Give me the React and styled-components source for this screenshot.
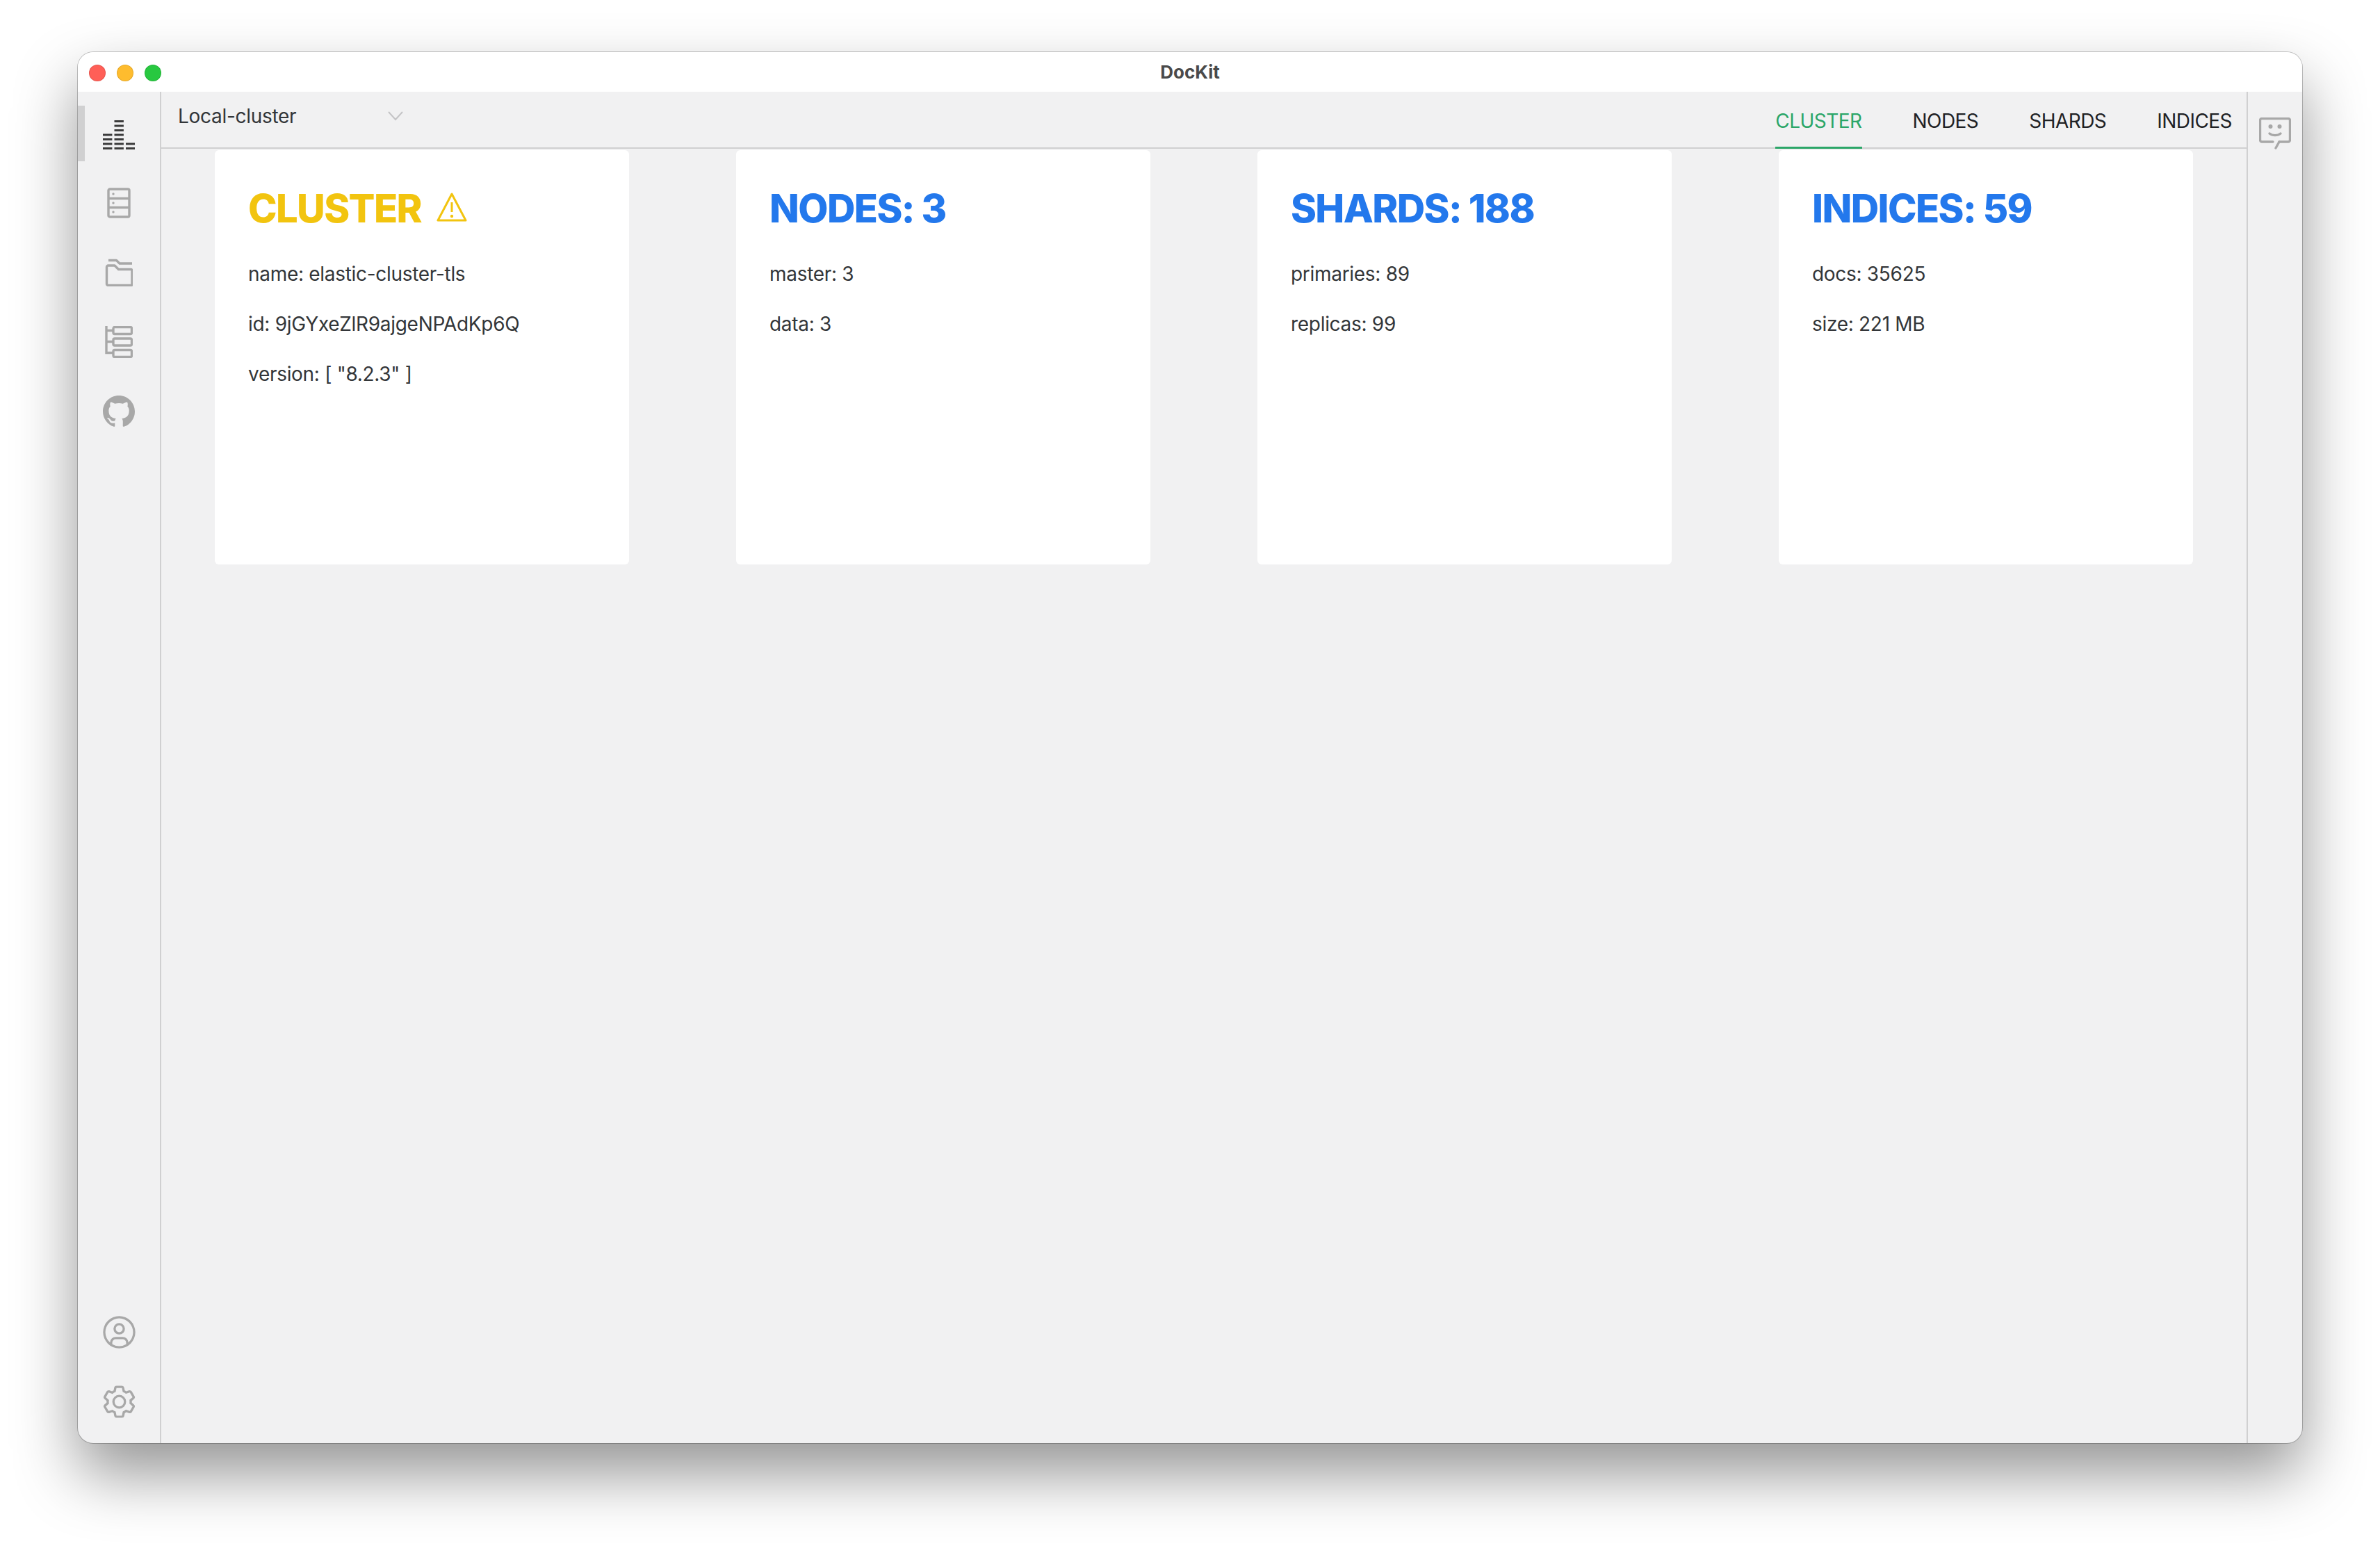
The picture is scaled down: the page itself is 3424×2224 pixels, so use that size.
import React from "react";
import styled, { createGlobalStyle } from "styled-components";
import { BsGithub } from "react-icons/bs";

const Global = createGlobalStyle`
  html, body { margin: 0; padding: 0; background: #fff; }
  * { box-sizing: border-box; }
`;

const Stage = styled.div`
  width: 3424px;
  height: 2224px;
  padding: 75px 112px 148px;
  background: #fff;
  font-family: Inter, "Liberation Sans", sans-serif;
  overflow: hidden;
`;
const Win = styled.div`
  height: 2001px;
  display: flex;
  flex-direction: column;
  border-radius: 22px;
  overflow: hidden;
  background: #f1f1f2;
  box-shadow: 0 0 0 1px rgba(0, 0, 0, 0.22), 0 44px 90px rgba(0, 0, 0, 0.42);
`;
const TitleBar = styled.div`
  height: 57px;
  flex: none;
  background: #fff;
  display: grid;
  grid-template-columns: 1fr auto 1fr;
  align-items: center;
  padding: 0 16px;
`;
const Lights = styled.div`
  display: flex;
  gap: 16px;
  padding-top: 2px;
`;
const Light = styled.span`
  width: 24px;
  height: 24px;
  border-radius: 50%;
  background: ${(p) => p.$c};
  box-shadow: inset 0 0 0 1px rgba(0, 0, 0, 0.1);
`;
const Title = styled.div`
  font-size: 26px;
  font-weight: 700;
  color: #4a4a4a;
`;
const Body = styled.div`
  flex: 1;
  min-height: 0;
  display: flex;
`;
const Rail = styled.nav`
  width: 120px;
  flex: none;
  display: flex;
  flex-direction: column;
  gap: 20px;
  padding: 20px 0;
  border-right: 2px solid #d0d0d1;
`;
const Spacer = styled.div`
  flex: 1;
`;
const RailItem = styled.div`
  position: relative;
  height: 80px;
  display: flex;
  align-items: center;
  justify-content: center;
  color: ${(p) => (p.$active ? "#3b3b3b" : "#a8a8a8")};
  &::before {
    content: "";
    display: ${(p) => (p.$active ? "block" : "none")};
    position: absolute;
    left: 0;
    top: 0;
    bottom: 0;
    width: 10px;
    background: #d0d0d1;
  }
`;
const Main = styled.main`
  flex: 1;
  min-width: 0;
  display: flex;
  flex-direction: column;
`;
const Header = styled.header`
  height: 82px;
  flex: none;
  display: flex;
  justify-content: space-between;
  border-bottom: 2px solid #d0d0d1;
`;
const ClusterSelect = styled.div`
  width: 348px;
  height: 70px;
  display: flex;
  align-items: center;
  justify-content: space-between;
  padding: 0 0 0 24px;
  font-size: 28px;
  letter-spacing: -0.3px;
  color: #333639;
`;
const Tabs = styled.div`
  display: flex;
  gap: 73px;
  padding-right: 21px;
`;
const Tab = styled.div`
  height: 82px;
  margin-bottom: -2px;
  padding-top: 22px;
  font-size: 28px;
  line-height: 40px;
  letter-spacing: -0.55px;
  color: ${(p) => (p.$active ? "#2ba668" : "#1f2225")};
  border-bottom: 3px solid ${(p) => (p.$active ? "#2ba668" : "transparent")};
`;
const Cards = styled.section`
  display: flex;
  justify-content: space-around;
  padding-top: 2px;
`;
const Card = styled.article`
  width: 596px;
  height: 596px;
  background: #fff;
  border-radius: 6px;
  padding: 48px;
`;
const CardTitle = styled.h2`
  margin: 0 0 36px;
  display: flex;
  align-items: center;
  gap: 22px;
  font-size: 56px;
  line-height: 72px;
  font-weight: 800;
  letter-spacing: -1.6px;
  color: ${(p) => p.$c};
`;
const Line = styled.p`
  margin: 0 0 28px;
  font-size: 28px;
  line-height: 44px;
  letter-spacing: -0.3px;
  color: #333639;
`;
const RightRail = styled.aside`
  width: 80px;
  flex: none;
  border-left: 2px solid #d0d0d1;
  padding-top: 37px;
  display: flex;
  justify-content: center;
  color: #a8a8a8;
`;

const HistogramSvg = styled.svg`
  margin-top: 2px;
`;
const Histogram = () => {
  const cols = [
    [0, 4],
    [16.5, 7],
    [33, 2],
  ];
  const rects = [];
  cols.forEach(([x, n]) => {
    for (let i = 0; i < n; i++) {
      rects.push(<rect key={`${x}-${i}`} x={x} y={41 - i * 6.5} width="13.4" height="3" />);
    }
  });
  return (
    <HistogramSvg width="46" height="44" viewBox="0 0 46 44" fill="currentColor" aria-hidden="true">
      {rects}
    </HistogramSvg>
  );
};
const ServerIcon = () => (
  <svg width="34" height="44" viewBox="0 0 34 44" fill="none" stroke="currentColor" strokeWidth="3.4" aria-hidden="true">
    <rect x="2" y="2" width="30" height="40" rx="2" />
    <path d="M2 15.5h30M2 28.5h30" />
    <g fill="currentColor" stroke="none">
      <circle cx="9" cy="9" r="1.7" />
      <circle cx="9" cy="22" r="1.7" />
      <circle cx="9" cy="35" r="1.7" />
    </g>
  </svg>
);
const FolderIcon = () => (
  <svg width="40" height="40" viewBox="0 0 40 40" fill="none" stroke="currentColor" strokeWidth="3.4" strokeLinejoin="round" aria-hidden="true">
    <path d="M5 2.500h11.500l4.500 4.500H39" />
    <path d="M4.500 10H14l5.500 5.500H37a2 2 0 0 1 2 2V37a1.500 1.500 0 0 1-1.500 1.500h-33a2 2 0 0 1-2-2V12a2 2 0 0 1 2-2z" />
  </svg>
);
const TreeIcon = () => (
  <svg width="40" height="46" viewBox="0 0 40 46" fill="none" stroke="currentColor" strokeWidth="3.4" aria-hidden="true">
    <path d="M2 0v38.500h10M2 6.500h10M2 22.500h10" />
    <rect x="12" y="1.500" width="26.500" height="10" rx="2" />
    <rect x="12" y="18" width="26.500" height="10" rx="2" />
    <rect x="12" y="34.500" width="26.500" height="10" rx="2" />
  </svg>
);
const UserIcon = () => (
  <svg width="53" height="53" viewBox="0 0 32 32" fill="currentColor" aria-hidden="true">
    <path d="M16 8a5 5 0 1 0 5 5a5 5 0 0 0-5-5zm0 8a3 3 0 1 1 3-3a3.003 3.003 0 0 1-3 3z" />
    <path fillRule="evenodd" d="M16 2a14 14 0 1 0 14 14A14.016 14.016 0 0 0 16 2zm-6 24.377V25a3.003 3.003 0 0 1 3-3h6a3.003 3.003 0 0 1 3 3v1.377a11.899 11.899 0 0 1-12 0zm13.992-1.451A5.002 5.002 0 0 0 19 20h-6a5.002 5.002 0 0 0-4.992 4.926a12 12 0 1 1 15.985 0z" />
  </svg>
);
const GearIcon = () => (
  <svg width="53" height="53" viewBox="0 0 32 32" fill="currentColor" aria-hidden="true">
    <path fillRule="evenodd" d="M27 16.760v-1.530l1.920-1.680A2 2 0 0 0 29.300 11l-2.360-4a2 2 0 0 0-1.730-1a2 2 0 0 0-.640.100l-2.430.820a11.350 11.350 0 0 0-1.310-.750l-.510-2.520a2 2 0 0 0-2-1.610h-4.680a2 2 0 0 0-2 1.610l-.510 2.520a11.480 11.480 0 0 0-1.320.750l-2.380-.860A2 2 0 0 0 6.790 6a2 2 0 0 0-1.730 1L2.700 11a2 2 0 0 0 .410 2.510L5 15.240v1.530l-1.890 1.680A2 2 0 0 0 2.700 21l2.360 4a2 2 0 0 0 1.730 1a2 2 0 0 0 .640-.100l2.430-.820a11.350 11.350 0 0 0 1.310.750l.510 2.520a2 2 0 0 0 2 1.610h4.720a2 2 0 0 0 2-1.610l.510-2.520a11.480 11.480 0 0 0 1.320-.750l2.420.820a2 2 0 0 0 .640.100a2 2 0 0 0 1.730-1l2.280-4a2 2 0 0 0-.410-2.510zM25.210 24l-3.430-1.160a8.860 8.860 0 0 1-2.710 1.570L18.360 28h-4.720l-.710-3.550a9.360 9.360 0 0 1-2.700-1.570L6.790 24l-2.360-4l2.720-2.400a8.900 8.900 0 0 1 0-3.130L4.430 12l2.360-4l3.430 1.160a8.860 8.860 0 0 1 2.710-1.570L13.640 4h4.720l.710 3.550a9.360 9.360 0 0 1 2.700 1.570L25.210 8l2.360 4l-2.720 2.400a8.900 8.900 0 0 1 0 3.130L27.570 20z" />
    <path fillRule="evenodd" d="M16 22a6 6 0 1 1 6-6a5.940 5.940 0 0 1-6 6zm0-10a3.910 3.910 0 0 0-4 4a3.910 3.910 0 0 0 4 4a3.910 3.910 0 0 0 4-4a3.910 3.910 0 0 0-4-4z" />
  </svg>
);
const FeedbackIcon = () => (
  <svg width="46" height="46" viewBox="0 0 46 46" fill="none" stroke="currentColor" strokeWidth="3.4" strokeLinecap="round" strokeLinejoin="round" aria-hidden="true">
    <path d="M29 35h13a2.500 2.500 0 0 0 2.500-2.500V4a2.500 2.500 0 0 0-2.500-2.500H4A2.500 2.500 0 0 0 1.500 4v28.500A2.500 2.500 0 0 0 4 35h16" />
    <path d="M29 35l-5 9" />
    <path d="M15 23c4 3.500 12 3.500 16 0" />
    <circle cx="16.500" cy="13" r="3" fill="currentColor" stroke="none" />
    <circle cx="29.500" cy="13" r="3" fill="currentColor" stroke="none" />
  </svg>
);
const Chevron = () => (
  <svg width="22" height="14" viewBox="0 0 22 14" fill="none" stroke="#c4c4c6" strokeWidth="2" aria-hidden="true">
    <path d="M1 1l10 11L21 1" />
  </svg>
);
const WarnSvg = styled.svg`
  margin-top: -4px;
`;
const WarnIcon = () => (
  <WarnSvg width="44" height="42" viewBox="0 0 44 42" fill="none" stroke="currentColor" strokeWidth="3" strokeLinejoin="round" aria-hidden="true">
    <path d="M22 2L2 40h40z" />
    <path d="M22 14v14" />
    <circle cx="22" cy="34" r="2.200" fill="currentColor" stroke="none" />
  </WarnSvg>
);

const cards = [
  { title: "CLUSTER", color: "#f2c40f", warn: true, lines: ["name: elastic-cluster-tls", "id: 9jGYxeZlR9ajgeNPAdKp6Q", 'version: [ "8.2.3" ]'] },
  { title: "NODES: 3", color: "#2378ec", lines: ["master: 3", "data: 3"] },
  { title: "SHARDS: 188", color: "#2378ec", lines: ["primaries: 89", "replicas: 99"] },
  { title: "INDICES: 59", color: "#2378ec", lines: ["docs: 35625", "size: 221 MB"] },
];

export default function App() {
  return (
    <Stage>
      <Global />
      <Win>
        <TitleBar>
          <Lights>
            <Light $c="#ff5f57" />
            <Light $c="#febc2e" />
            <Light $c="#28c840" />
          </Lights>
          <Title>DocKit</Title>
          <span />
        </TitleBar>
        <Body>
          <Rail>
            <RailItem $active><Histogram /></RailItem>
            <RailItem><ServerIcon /></RailItem>
            <RailItem><FolderIcon /></RailItem>
            <RailItem><TreeIcon /></RailItem>
            <RailItem><BsGithub size={46} /></RailItem>
            <Spacer />
            <RailItem><UserIcon /></RailItem>
            <RailItem><GearIcon /></RailItem>
          </Rail>
          <Main>
            <Header>
              <ClusterSelect>
                Local-cluster
                <Chevron />
              </ClusterSelect>
              <Tabs>
                <Tab $active>CLUSTER</Tab>
                <Tab>NODES</Tab>
                <Tab>SHARDS</Tab>
                <Tab>INDICES</Tab>
              </Tabs>
            </Header>
            <Cards>
              {cards.map((c) => (
                <Card key={c.title}>
                  <CardTitle $c={c.color}>
                    {c.title}
                    {c.warn && <WarnIcon />}
                  </CardTitle>
                  {c.lines.map((l) => (
                    <Line key={l}>{l}</Line>
                  ))}
                </Card>
              ))}
            </Cards>
          </Main>
          <RightRail><FeedbackIcon /></RightRail>
        </Body>
      </Win>
    </Stage>
  );
}
